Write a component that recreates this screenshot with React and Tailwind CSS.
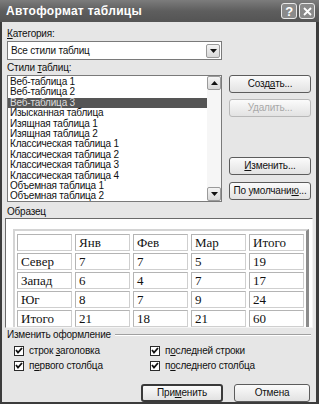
import React from 'react';

const styles = [
  'Веб-таблица 1',
  'Веб-таблица 2',
  'Веб-таблица 3',
  'Изысканная таблица',
  'Изящная таблица 1',
  'Изящная таблица 2',
  'Классическая таблица 1',
  'Классическая таблица 2',
  'Классическая таблица 3',
  'Классическая таблица 4',
  'Объемная таблица 1',
  'Объемная таблица 2',
];

const rows = [
  ['', 'Янв', 'Фев', 'Мар', 'Итого'],
  ['Север', '7', '7', '5', '19'],
  ['Запад', '6', '4', '7', '17'],
  ['Юг', '8', '7', '9', '24'],
  ['Итого', '21', '18', '21', '60'],
];

// mnemonic letter
const U = ({ children }) => <span className="underline underline-offset-[1px]">{children}</span>;

const Button = ({ children, disabled, primary, className = '' }) => (
  <div
    className={
      'h-[18px] flex items-center justify-center rounded-[3px] bg-gradient-to-b from-[#fbfbfb] to-[#e2e2e2] ' +
      (primary ? 'border-2 border-[#3a3a3a] ' : 'border border-[#5c5c5c] ') +
      (disabled ? 'text-[#a8a8a8] border-[#b8b8b8] ' : 'text-[#111] ') +
      className
    }
  >
    {children}
  </div>
);

const Arrow = ({ up }) => (
  <div className="w-[14px] h-[14px] bg-gradient-to-b from-[#f4f4f4] to-[#d8d8d8] border border-[#9a9a9a] rounded-[2px] flex items-center justify-center">
    <svg width="7" height="4" viewBox="0 0 7 4">
      <path d={up ? 'M0 4 L3.5 0 L7 4 Z' : 'M0 0 L3.5 4 L7 0 Z'} fill="#111" />
    </svg>
  </div>
);

const Check = ({ children, className = '' }) => (
  <div className={'flex items-center gap-[5px] h-[15px] ' + className}>
    <div className="w-[10px] h-[10px] border border-[#2a2a2a] bg-white flex items-center justify-center">
      <svg width="8" height="7" viewBox="0 0 8 7">
        <path d="M1 3 L3 5.5 L7 1" stroke="#111" strokeWidth="1.8" fill="none" />
      </svg>
    </div>
    <span>{children}</span>
  </div>
);

export default function App() {
  return (
    <div className="w-[319px] h-[404px] flex flex-col overflow-hidden bg-[#e6e6e6] text-[10px] leading-[12px] tracking-[-0.2px] text-[#111] font-['Liberation_Sans',Arial,sans-serif]">
      {/* title bar */}
      <div className="h-[22px] shrink-0 flex items-center justify-between pl-[6px] pr-[4px] bg-gradient-to-b from-[#7c7c7c] via-[#5e5e5e] to-[#545454]">
        <span className="text-white font-bold text-[12px] tracking-[0.3px]">Автоформат таблицы</span>
        <div className="flex gap-[2px]">
          <div className="w-[16px] h-[16px] rounded-[3px] border border-[#e8e8e8] bg-[#8a8a8a] flex items-center justify-center text-white font-bold text-[13px] leading-none">?</div>
          <div className="w-[16px] h-[16px] rounded-[3px] border border-[#e8e8e8] bg-[#8a8a8a] flex items-center justify-center">
            <svg width="9" height="9" viewBox="0 0 9 9">
              <path d="M1 1 L8 8 M8 1 L1 8" stroke="#fff" strokeWidth="1.8" />
            </svg>
          </div>
        </div>
      </div>

      {/* body */}
      <div className="flex-1 flex flex-col border-l-2 border-r-[3px] border-b-[3px] border-[#3c3c3c] px-[5px]">
        <div className="mt-[6px] h-[13px]"><U>К</U>атегория:</div>
        <div className="h-[19px] w-[215px] bg-white border border-[#7a7a7a] flex items-center justify-between pl-[3px] pr-[1px]">
          <span>Все стили таблиц</span>
          <Arrow />
        </div>
        <div className="mt-[2px] h-[12px]">Стили <U>т</U>аблиц:</div>

        <div className="flex gap-[7px] mt-[1px]">
          <div className="w-[215px] h-[127px] bg-white border border-[#7a7a7a] flex">
            <div className="flex-1 flex flex-col pt-[1px] overflow-hidden">
              {styles.map((s, i) => (
                <div
                  key={s}
                  className={'h-[10.4px] leading-[10.4px] pl-[2px] whitespace-nowrap ' + (i === 2 ? 'bg-[#555] text-[#ddd]' : '')}
                >
                  {s}
                </div>
              ))}
            </div>
            <div className="w-[14px] flex flex-col justify-between bg-[#f6f6f6]">
              <Arrow up />
              <Arrow />
            </div>
          </div>
          <div className="w-[82px] flex flex-col">
            <Button>Созд<U>а</U>ть...</Button>
            <Button disabled className="mt-[6px]">Удалить...</Button>
            <Button className="mt-[40px]"><U>И</U>зменить...</Button>
            <Button className="mt-[7px]">По умолчани<U>ю</U>...</Button>
          </div>
        </div>

        <div className="mt-[4px] h-[12px]">Образец</div>
        <div className="-mx-[2px] h-[110px] overflow-hidden bg-white border border-[#6a6a6a] border-b-[#f4f4f4] border-r-[#f4f4f4] pl-[7px] pt-[10px]">
          <div className="w-fit border-l-2 border-t-2 border-[#d4d4d4] border-r-[3px] border-b-[3px] border-r-[#8c8c8c] border-b-[#8c8c8c] p-[2px] pt-[3px]">
            <div className="grid grid-cols-[repeat(5,55px)] gap-x-[3px] gap-y-[2px] font-['Liberation_Serif','Times_New_Roman',serif] text-[13px] tracking-normal">
              {rows.flat().map((c, i) => (
                <div key={i} className="h-[17px] border border-[#cfcfcf] border-t-[#b4b4b4] border-l-[#b4b4b4] pl-[3px] leading-[16px]">
                  {c}
                </div>
              ))}
            </div>
          </div>
        </div>

        <div className="mt-[1px] h-[12px] flex items-center gap-[4px]">
          <span className="whitespace-nowrap">Изменить оформление</span>
          <div className="flex-1 border-t border-[#a0a0a0] border-b border-b-white" />
        </div>

        <div className="mt-[2px] grid grid-cols-[136px_1fr] pl-[7px]">
          <Check>строк <U>з</U>аголовка</Check>
          <Check>п<U>о</U>следней строки</Check>
          <Check>п<U>е</U>рвого столбца</Check>
          <Check>п<U>о</U>следнего столбца</Check>
        </div>

        <div className="mt-[11px] flex justify-end gap-[11px] pr-[1px]">
          <Button primary className="w-[82px]">При<U>м</U>енить</Button>
          <Button className="w-[76px]">Отмена</Button>
        </div>
      </div>
    </div>
  );
}
